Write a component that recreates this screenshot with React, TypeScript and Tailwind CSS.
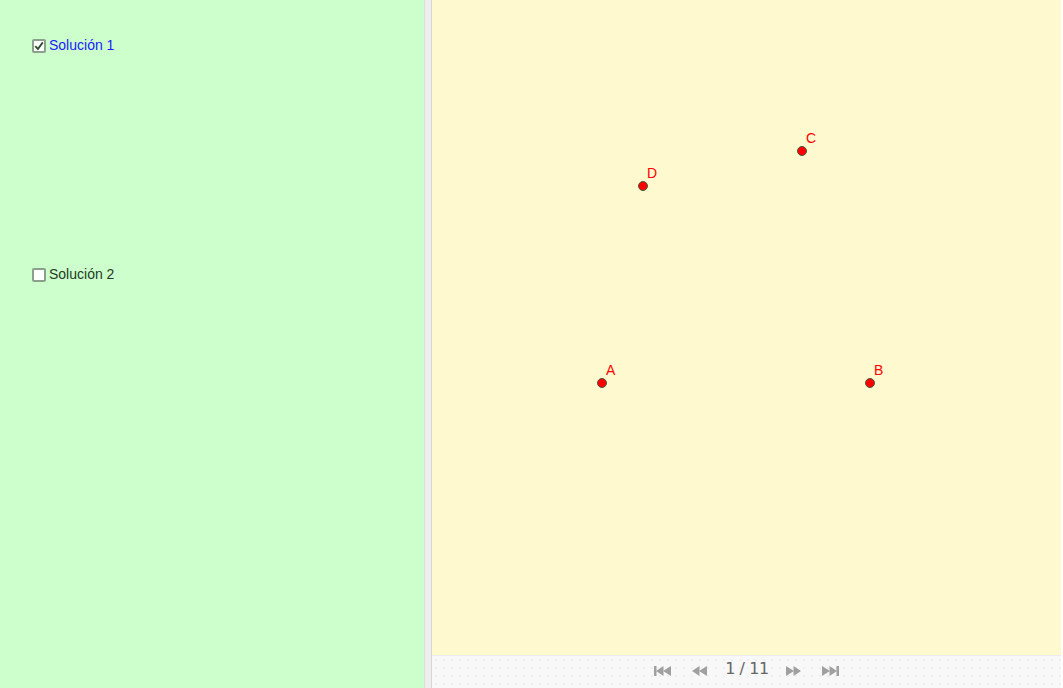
import React from 'react';

const points = [
  { name: 'A', x: 170, y: 383 },
  { name: 'B', x: 438, y: 383 },
  { name: 'C', x: 370, y: 151 },
  { name: 'D', x: 211, y: 186 },
];

function Check({ checked }: { checked: boolean }) {
  return <span className="w-[14px] h-[14px] rounded-[2px] border-2 border-[#8aa08a] bg-white flex items-center justify-center">
      {checked && <svg width="10" height="10" viewBox="0 0 10 10">
          <path d="M1.3 5.2 L3.9 8 L8.8 1.4" fill="none" stroke="#2f4f2f" strokeWidth="1.9" />
        </svg>}
    </span>;
}

function NavIcon({ dir, end }: { dir: 'l' | 'r'; end?: boolean }) {
  const shapes = dir === 'l' ? <>
        {end && <rect x="0" y="1" width="2.5" height="10" />}
        <path d="M2 6 L9.5 1 L9.5 11 Z" />
        <path d="M9 6 L17 1 L17 11 Z" />
      </> : <>
        <path d="M0 1 L8 6 L0 11 Z" />
        <path d="M7.5 1 L15 6 L7.5 11 Z" />
        {end && <rect x="14.5" y="1" width="2.5" height="10" />}
      </>;
  return <svg width="17" height="12" viewBox="0 0 17 12" fill="#a0a0a0">{shapes}</svg>;
}

export default function App() {
  return <div className="flex w-[1063px] h-[688px] bg-white font-['Liberation_Sans',Arial,sans-serif]">
      {/* left panel */}
      <div className="w-[424px] bg-[#ccffcc] relative">
        <label className="absolute left-[32px] top-[35px] flex items-center gap-[3px] text-[14px] text-[#1a1aff]">
          <Check checked />
          Solución 1
        </label>
        <label className="absolute left-[32px] top-[264px] flex items-center gap-[3px] text-[14px] text-[#1f3a1f]">
          <Check checked={false} />
          Solución 2
        </label>
      </div>

      {/* divider */}
      <div className="w-[8px] bg-[#eeeeee] border-l border-l-[#dcdcdc] border-r border-r-[#d6d6d6]" />

      {/* graphics view */}
      <div className="w-[629px] flex flex-col">
        <div className="flex-1 bg-[#fff9cf] relative">
          {points.map(p => <React.Fragment key={p.name}>
              <div className="absolute w-[10px] h-[10px] rounded-full bg-[#ff0000] border-[1.5px] border-[#3f5f3f]" style={{ left: p.x - 5, top: p.y - 5 }} />
              <span className="absolute text-[14px] leading-none text-[#ff0000]" style={{ left: p.x + 4, top: p.y - 20 }}>
                {p.name}
              </span>
            </React.Fragment>)}
        </div>
        <div className="h-[33px] bg-[#f8f8f8] border-t border-[#ececec] flex items-center justify-center bg-[radial-gradient(#e4e4e4_0.6px,transparent_0.8px)] bg-[length:8px_8px]">
          <div className="flex items-center -translate-y-[1px]">
            <NavIcon dir="l" end />
            <div className="w-[19px]" />
            <NavIcon dir="l" />
            <div className="w-[18px]" />
            <span className="text-[16px] leading-none text-[#666666] font-['DejaVu_Sans',sans-serif] tracking-tight -translate-y-[2px]">1 / 11</span>
            <div className="w-[17px]" />
            <NavIcon dir="r" />
            <div className="w-[19px]" />
            <NavIcon dir="r" end />
          </div>
        </div>
      </div>
      <div className="w-[2px] bg-white" />
    </div>;
}
